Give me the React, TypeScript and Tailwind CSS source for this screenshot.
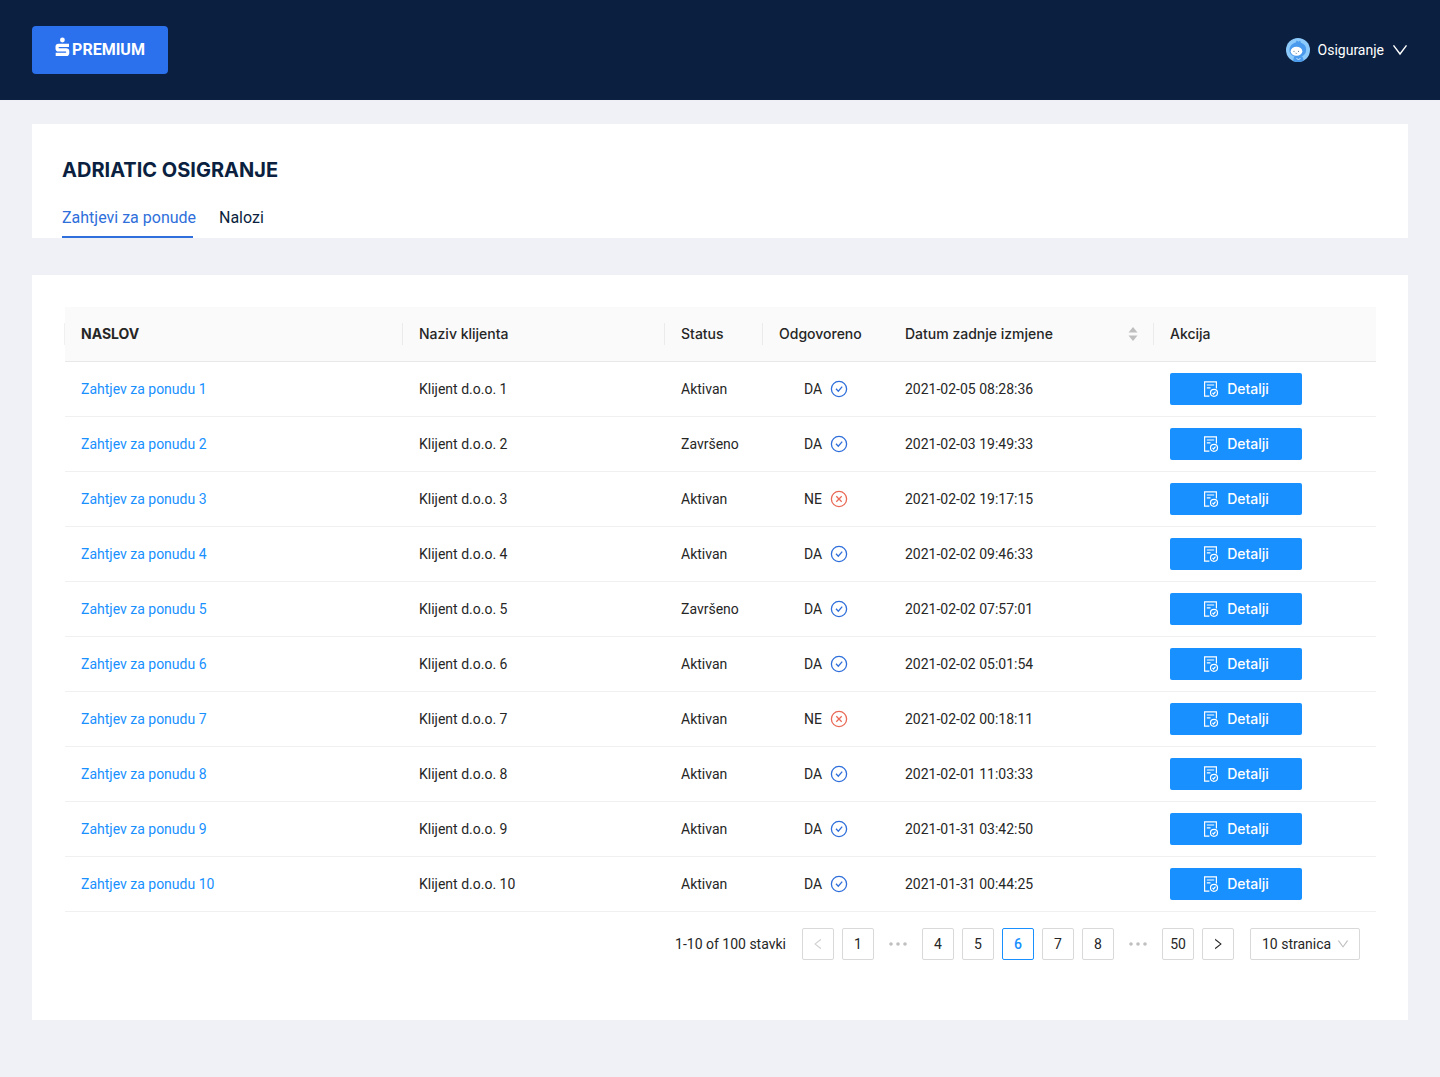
import { AiOutlineDown, AiOutlineLeft, AiOutlineRight } from "react-icons/ai";

type Request = {
  id: number;
  client: string;
  status: "Aktivan" | "Završeno";
  answered: boolean;
  changedAt: string;
};

const REQUESTS: Request[] = [
  { id: 1, client: "Klijent d.o.o. 1", status: "Aktivan", answered: true, changedAt: "2021-02-05 08:28:36" },
  { id: 2, client: "Klijent d.o.o. 2", status: "Završeno", answered: true, changedAt: "2021-02-03 19:49:33" },
  { id: 3, client: "Klijent d.o.o. 3", status: "Aktivan", answered: false, changedAt: "2021-02-02 19:17:15" },
  { id: 4, client: "Klijent d.o.o. 4", status: "Aktivan", answered: true, changedAt: "2021-02-02 09:46:33" },
  { id: 5, client: "Klijent d.o.o. 5", status: "Završeno", answered: true, changedAt: "2021-02-02 07:57:01" },
  { id: 6, client: "Klijent d.o.o. 6", status: "Aktivan", answered: true, changedAt: "2021-02-02 05:01:54" },
  { id: 7, client: "Klijent d.o.o. 7", status: "Aktivan", answered: false, changedAt: "2021-02-02 00:18:11" },
  { id: 8, client: "Klijent d.o.o. 8", status: "Aktivan", answered: true, changedAt: "2021-02-01 11:03:33" },
  { id: 9, client: "Klijent d.o.o. 9", status: "Aktivan", answered: true, changedAt: "2021-01-31 03:42:50" },
  { id: 10, client: "Klijent d.o.o. 10", status: "Aktivan", answered: true, changedAt: "2021-01-31 00:44:25" },
];

// null is a skipped range
const PAGES: (number | null)[] = [1, null, 4, 5, 6, 7, 8, null, 50];
const CURRENT_PAGE = 6;

const DIVIDER =
  "before:absolute before:right-0 before:top-4 before:h-[22px] before:w-px before:bg-black/6";
const TH = "relative h-[55px] border-b border-[#e8e8e8] px-4 text-left";
const TD = "h-[55px] border-b border-[#f0f0f0] px-4";
const PAGE_BOX = "flex size-8 items-center justify-center rounded-xs border";

function SIcon() {
  return (
    <svg viewBox="0 0 15 26" className="h-[26px] w-[15px]" fill="none" aria-hidden="true">
      <circle cx="7.4" cy="3" r="2.4" fill="#fff" />
      <path
        d="M14 8.4H3.6c-1 0-1.500.6-1.500 1.400v1.600c0 .9.6 1.500 1.500 1.500h7.600c.9 0 1.500.6 1.500 1.500v1.500c0 .9-.6 1.500-1.500 1.500H.7"
        stroke="#fff"
        strokeWidth="3.2"
      />
    </svg>
  );
}

function Avatar() {
  return (
    <svg viewBox="0 0 24 24" className="size-6" aria-hidden="true">
      <circle cx="12" cy="12" r="12" fill="#8ccafc" />
      <path
        d="M3.500 13.500C3 8.500 6 5.500 9.500 4.800L10.800 2.500l1.700 1.200 1.700-1.200.6 2.300c3.700 1 6.200 4.200 5.200 8.700-1 4-4.500 5.500-8 5.500s-7.500-1.500-8.500-5.500z"
        fill="#4a9bee"
      />
      <path d="M8 18.500c2-1 6.500-1 8.500.3l1.300 3.600a12 12 0 0 1-10.600.6z" fill="#4a9bee" />
      <ellipse cx="10.500" cy="13.200" rx="5.800" ry="4.500" fill="#fff" />
      <circle cx="8" cy="13.300" r=".5" fill="#27466f" />
      <circle cx="12.500" cy="13.300" r=".5" fill="#27466f" />
      <path d="M9.500 15.200q.8.500 1.600 0" stroke="#27466f" strokeWidth=".5" fill="none" />
      <path d="M10.500 20.500l2 1 2-1" stroke="#d9eeff" strokeWidth=".9" fill="none" />
    </svg>
  );
}

function AnsweredIcon({ yes }: { yes: boolean }) {
  return (
    <svg
      viewBox="0 0 18 18"
      className="size-[18px]"
      fill="none"
      stroke={yes ? "#2f6fdb" : "#ea6a57"}
      strokeWidth="1.3"
      aria-hidden="true"
    >
      <circle cx="9" cy="9" r="7.6" />
      {yes ? <path d="M6 8.8l2.300 2.400L12.200 6.600" /> : <path d="M6.300 6.300l5.400 5.400M11.700 6.300l-5.400 5.400" />}
    </svg>
  );
}

function DetailsIcon() {
  return (
    <svg
      viewBox="0 0 16 16"
      className="size-4"
      fill="none"
      stroke="currentColor"
      strokeWidth="1.2"
      aria-hidden="true"
    >
      <path d="M6.400 15.200H1.600V.8h11.800v6.600" />
      <path d="M3.800 4h7.400M3.800 6.800h3.700" />
      <circle cx="11" cy="11.800" r="3.500" />
      <path d="M9.500 11.800l1.100 1.200 1.900-2.300" />
    </svg>
  );
}

export default function App() {
  return (
    <div className="min-h-screen bg-[#f0f1f6] font-['Roboto',sans-serif] text-sm text-[#262626]">
      <header className="flex h-[100px] items-center justify-between bg-[#0b1f40] px-8">
        <a
          href="#"
          className="flex h-12 w-[136px] items-center justify-center gap-0.5 rounded bg-[#2b71ee] text-base font-bold text-white"
        >
          <SIcon />
          PREMIUM
        </a>
        <button type="button" className="flex items-center gap-2 text-white">
          <Avatar />
          Osiguranje
          <svg viewBox="0 0 16 16" className="size-4" fill="none" stroke="currentColor" strokeWidth="1.4" aria-hidden="true">
            <path d="M1.500 3.300L8 12l6.500-8.700" />
          </svg>
        </button>
      </header>

      <main className="px-8 pt-6 pb-14">
        <section className="bg-white px-[30px] pt-8">
          <h1 className="font-['Inter',sans-serif] text-xl leading-7 font-bold text-[#0b1f40]">
            ADRIATIC OSIGRANJE
          </h1>
          <nav className="mt-3 flex gap-[26px] text-base text-[#0b1f40]">
            <a
              href="#"
              aria-current="page"
              className="h-[42px] w-[131px] border-b-2 border-[#2f6fdb] pt-2.5 whitespace-nowrap text-[#2f6fdb]"
            >
              Zahtjevi za ponude
            </a>
            <a href="#" className="h-[42px] pt-2.5">
              Nalozi
            </a>
          </nav>
        </section>

        <section className="mt-[37px] bg-white pt-8 pr-8 pb-[60px] pl-[33px]">
          <table className="w-full table-fixed border-separate border-spacing-0">
            <colgroup>
              <col />
              <col className="w-[262px]" />
              <col className="w-[98px]" />
              <col className="w-[126px]" />
              <col className="w-[265px]" />
              <col className="w-[222px]" />
            </colgroup>
            <thead className="bg-[#fafafa] font-['Inter',sans-serif]">
              <tr>
                <th
                  className={`${TH} ${DIVIDER} font-bold after:absolute after:top-4 after:-left-px after:h-[22px] after:w-px after:bg-black/6`}
                >
                  NASLOV
                </th>
                <th className={`${TH} ${DIVIDER} font-medium`}>Naziv klijenta</th>
                <th className={`${TH} ${DIVIDER} font-medium`}>Status</th>
                <th className={`${TH} font-medium`}>Odgovoreno</th>
                <th className={`${TH} ${DIVIDER} font-medium`}>
                  <button type="button" className="flex w-full items-center justify-between">
                    Datum zadnje izmjene
                    <svg viewBox="0 0 10 14" className="h-3.5 w-2.5" fill="#bfbfbf" aria-hidden="true">
                      <path d="M5 0l4.500 5.500h-9zM5 14l4.500-5.500h-9z" />
                    </svg>
                  </button>
                </th>
                <th className={`${TH} font-medium`}>Akcija</th>
              </tr>
            </thead>
            <tbody>
              {REQUESTS.map((request) => (
                <tr key={request.id}>
                  <td className={TD}>
                    <a href="#" className="text-[#1890ff]">
                      Zahtjev za ponudu {request.id}
                    </a>
                  </td>
                  <td className={TD}>{request.client}</td>
                  <td className={TD}>{request.status}</td>
                  <td className={TD}>
                    <span className="flex items-center justify-center gap-2">
                      {request.answered ? "DA" : "NE"}
                      <AnsweredIcon yes={request.answered} />
                    </span>
                  </td>
                  <td className={TD}>{request.changedAt}</td>
                  <td className={TD}>
                    <button
                      type="button"
                      className="flex h-8 w-[132px] items-center justify-center gap-2 rounded-xs bg-[#1890ff] font-['Inter',sans-serif] font-medium text-white"
                    >
                      <DetailsIcon />
                      Detalji
                    </button>
                  </td>
                </tr>
              ))}
            </tbody>
          </table>

          <nav className="mt-4 flex items-center justify-end gap-2 pr-4" aria-label="Stranice">
            <span className="mr-2">1-10 of 100 stavki</span>
            <button
              type="button"
              disabled
              aria-label="Prethodna"
              className={`${PAGE_BOX} border-[#d9d9d9] text-[#d0d0d0]`}
            >
              <AiOutlineLeft className="size-3.5" />
            </button>
            {PAGES.map((page, i) =>
              page === null ? (
                <span key={`gap-${i}`} className="flex size-8 items-center justify-center">
                  <svg viewBox="0 0 18 4" className="h-1 w-[18px]" fill="#bfbfbf" aria-hidden="true">
                    <circle cx="2" cy="2" r="1.8" />
                    <circle cx="9" cy="2" r="1.8" />
                    <circle cx="16" cy="2" r="1.8" />
                  </svg>
                </span>
              ) : (
                <button
                  key={page}
                  type="button"
                  className={`${PAGE_BOX} ${
                    page === CURRENT_PAGE ? "border-[#1890ff] font-medium text-[#1890ff]" : "border-[#d9d9d9]"
                  }`}
                >
                  {page}
                </button>
              ),
            )}
            <button type="button" aria-label="Sljedeća" className={`${PAGE_BOX} border-[#d9d9d9]`}>
              <AiOutlineRight className="size-3.5" />
            </button>
            <span className="relative ml-2">
              <select
                aria-label="Stavki po stranici"
                className="h-8 w-[110px] appearance-none rounded-xs border border-[#d9d9d9] bg-white pl-[11px]"
              >
                <option>10 stranica</option>
              </select>
              <AiOutlineDown className="pointer-events-none absolute top-[9px] right-2.5 size-3.5 text-[#bfbfbf]" />
            </span>
          </nav>
        </section>
      </main>
    </div>
  );
}
